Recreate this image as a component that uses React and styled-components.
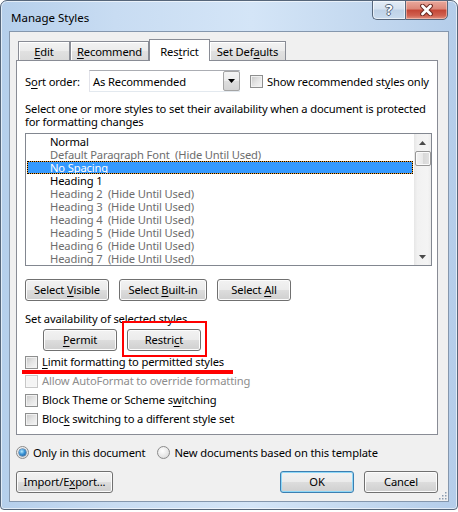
import React from "react";
import styled, { createGlobalStyle } from "styled-components";

const FONT = `"Noto Sans", "DejaVu Sans", sans-serif`;
const SIZE = "11.2px";
const TRACK = "-0.15px";

const Global = createGlobalStyle`
  html, body { margin: 0; padding: 0; background: #ffffff; }
  body { font-family: ${FONT}; font-size: ${SIZE}; letter-spacing: ${TRACK}; color: #000; }
  * { box-sizing: border-box; }
  u { text-decoration-thickness: 1px; text-underline-offset: 2px; }
`;

const Window = styled.div`
  width: 458px;
  height: 510px;
  border: 1px solid #56667a;
  border-radius: 7px 7px 4px 4px;
  background: linear-gradient(90deg, #b5cfeb 0%, #c8dcf2 25%, #d4e5f7 55%, #c3d8ef 80%, #b4cdea 100%);
  box-shadow: inset 0 0 0 1px rgba(255, 255, 255, 0.6);
  padding: 0 8px 7px 8px;
  display: flex;
  flex-direction: column;
`;

const TitleBar = styled.div`
  height: 30px;
  display: flex;
  justify-content: space-between;
  align-items: flex-start;
`;

const Title = styled.div`
  margin: 9px 0 0 2px;
  font-size: 11.5px;
  letter-spacing: 0;
  line-height: 15px;
  color: #000;
`;

const CaptionButtons = styled.div`
  display: flex;
  margin: -1px 1px 0 0;
`;

const CaptionButton = styled.div`
  height: 20px;
  width: ${(p) => p.$w}px;
  border: 1px solid #57677c;
  display: flex;
  align-items: center;
  justify-content: center;
`;

const HelpButton = styled(CaptionButton)`
  border-right: none;
  border-radius: 0 0 0 5px;
  background: linear-gradient(#e3ecf6 0%, #d5e2f0 45%, #bfd2e7 50%, #c9dbee 100%);
  box-shadow: inset 0 0 0 1px rgba(255, 255, 255, 0.6);
  span {
    font-family: ${FONT};
    font-weight: bold;
    font-size: 14px;
    line-height: 14px;
    color: #ffffff;
    text-shadow: -1px 0 0 #53647a, 1px 0 0 #53647a, 0 -1px 0 #53647a, 0 1px 0 #53647a;
  }
`;

const CloseButton = styled(CaptionButton)`
  border-radius: 0 0 5px 0;
  background: linear-gradient(#e9a99d 0%, #dc8677 45%, #c44535 50%, #d0604f 80%, #e0907f 100%);
  box-shadow: inset 0 0 0 1px rgba(255, 220, 210, 0.5);
`;

const Client = styled.div`
  position: relative;
  flex: 1;
  border: 1px solid #8597ad;
  background: #f0f0f0;
  padding: 7px 10px 0 6px;
  display: flex;
  flex-direction: column;
`;

const TabStrip = styled.div`
  display: flex;
  align-items: flex-end;
  height: 22px;
  margin-left: 2px;
  position: relative;
  z-index: 2;
`;

const Tab = styled.div`
  width: ${(p) => p.$w}px;
  height: ${(p) => (p.$active ? 22 : 20)}px;
  margin-right: ${(p) => (p.$active ? -1 : 0)}px;
  border: 1px solid #898c95;
  border-bottom: ${(p) => (p.$active ? "none" : "1px solid #898c95")};
  background: ${(p) =>
    p.$active ? "#ffffff" : "linear-gradient(#f3f3f3 0%, #ebebeb 50%, #e1e1e1 51%, #dadada 100%)"};
  box-shadow: ${(p) => (p.$active ? "none" : "inset 1px 1px 0 #ffffff")};
  display: flex;
  align-items: center;
  justify-content: center;
  padding-top: 1px;
  line-height: 13px;
  position: relative;
  z-index: ${(p) => (p.$active ? 3 : 1)};
`;

const Panel = styled.div`
  margin-top: -1px;
  height: 375px;
  border: 1px solid #898c95;
  background: #ffffff;
  padding: 9px 5px 0 8px;
  display: flex;
  flex-direction: column;
  position: relative;
  z-index: 1;
`;

const Row = styled.div`
  display: flex;
  align-items: center;
  height: ${(p) => p.$h || 22}px;
  margin-top: ${(p) => p.$mt || 0}px;
  margin-left: ${(p) => p.$ml || 0}px;
  gap: ${(p) => p.$gap || 0}px;
  line-height: 13px;
  white-space: nowrap;
  position: relative;
`;

const Label = styled.span`
  width: ${(p) => p.$w}px;
  flex: none;
`;

const Combo = styled.div`
  width: 151px;
  height: 22px;
  border: 1px solid #abadb3;
  border-right-color: #e3e9ef;
  border-bottom-color: #e3e9ef;
  border-left-color: #e2e3ea;
  background: #ffffff;
  display: flex;
  align-items: center;
  justify-content: space-between;
  padding-left: 3px;
`;

const DropButton = styled.div`
  width: 17px;
  height: 20px;
  border: 1px solid #a4a4a4;
  border-radius: 2px;
  background: linear-gradient(#f4f4f4 0%, #ececec 50%, #dedede 51%, #d4d4d4 100%);
  display: flex;
  align-items: center;
  justify-content: center;
  margin-right: -1px;
`;

const CheckBox = styled.span`
  width: 13px;
  height: 13px;
  flex: none;
  border: 1px solid ${(p) => (p.$disabled ? "#c7c7c7" : "#8e8f8f")};
  background: ${(p) =>
    p.$disabled ? "#f4f4f4" : "linear-gradient(135deg, #c6c6c6 0%, #e4e4e4 50%, #f6f6f6 100%)"};
  box-shadow: inset 0 0 0 1px ${(p) => (p.$disabled ? "#f7f7f7" : "#f1f1f1")};
  margin-top: 1px;
`;

const Radio = styled.span`
  width: 13px;
  height: 13px;
  flex: none;
  border-radius: 50%;
  border: 1px solid #8b8b8b;
  margin-left: ${(p) => p.$ml || 0}px;
  background: radial-gradient(circle at 40% 35%, #ffffff 0%, #e6e6e6 60%, #cfcfcf 100%);
  display: flex;
  align-items: center;
  justify-content: center;
  &::after {
    content: "";
    width: 7px;
    height: 7px;
    border-radius: 50%;
    display: ${(p) => (p.$checked ? "block" : "none")};
    background: radial-gradient(circle at 40% 35%, #b8ecff 0%, #3b94d6 45%, #124d8c 100%);
    box-shadow: 0 0 0 0.5px #1c4f80;
  }
`;

const Description = styled.div`
  margin-top: 10px;
  line-height: 13px;
  white-space: nowrap;
`;

const ListBox = styled.div`
  margin-top: 5px;
  width: 407px;
  height: 133px;
  border: 1px solid #828790;
  display: flex;
  padding: 1px 0 0 1px;
  flex: none;
`;

const ListItems = styled.div`
  flex: 1;
  display: flex;
  flex-direction: column;
`;

const ListItem = styled.div`
  height: 13px;
  line-height: 13px;
  padding-left: 23px;
  white-space: pre;
  color: ${(p) => (p.$selected ? "#ffffff" : p.$hidden ? "#6d6d6d" : "#000000")};
  background: ${(p) => (p.$selected ? "#3399ff" : "transparent")};
  box-shadow: ${(p) => (p.$selected ? "inset 0 0 0 1px #f0a030" : "none")};
  outline: ${(p) => (p.$selected ? "1px dotted #000" : "none")};
  outline-offset: -1px;
`;

const ScrollBar = styled.div`
  width: 17px;
  margin-top: -1px;
  margin-left: 1px;
  background: linear-gradient(90deg, #e6e6e6 0%, #f1f1f1 20%, #f4f4f4 80%, #ececec 100%);
  display: flex;
  flex-direction: column;
  align-items: center;
`;

const ScrollArrow = styled.div`
  height: 17px;
  width: 17px;
  display: flex;
  align-items: center;
  justify-content: center;
`;

const Thumb = styled.div`
  width: 16px;
  height: 15px;
  border: 1px solid #979797;
  border-radius: 2px;
  background: linear-gradient(90deg, #f3f3f3 0%, #e8e8e8 50%, #d8d8d8 51%, #e2e2e2 100%);
  box-shadow: inset 0 0 0 1px #fbfbfb;
`;

const Spacer = styled.div`
  flex: 1;
`;

const Button = styled.button`
  width: ${(p) => p.$w}px;
  height: 22px;
  flex: none;
  padding: 0 0 1px 0;
  font-family: ${FONT};
  font-size: ${SIZE};
  letter-spacing: ${TRACK};
  line-height: 13px;
  color: #000000;
  border: 1px solid ${(p) => (p.$default ? "#3c7fb1" : "#707070")};
  border-radius: 3px;
  background: linear-gradient(#f2f2f2 0%, #ebebeb 50%, #dddddd 51%, #cfcfcf 100%);
  box-shadow: inset 0 0 0 1px ${(p) => (p.$default ? "#8fd8f8" : "#fcfcfc")};
  position: relative;
`;

const MarkedButton = styled(Button)`
  &::after {
    content: "";
    position: absolute;
    left: -6px;
    top: -9px;
    right: -7px;
    bottom: -7px;
    border: 2px solid #ff0000;
    pointer-events: none;
  }
`;

const Underlined = styled(Row)`
  &::after {
    content: "";
    position: absolute;
    left: -3px;
    top: 18px;
    width: 211px;
    height: 4px;
    background: #ff0000;
    pointer-events: none;
  }
`;

const Muted = styled.span`
  color: #8d8d8d;
`;

const ButtonBar = styled.div`
  display: flex;
  justify-content: space-between;
  margin-top: 10px;
`;

const RightButtons = styled.div`
  display: flex;
  gap: 10px;
`;

const Grip = styled.svg`
  position: absolute;
  right: 1px;
  bottom: 1px;
`;

const styles = [
  { name: "Normal" },
  { name: "Default Paragraph Font", hidden: true },
  { name: "No Spacing", selected: true },
  { name: "Heading 1" },
  { name: "Heading 2", hidden: true },
  { name: "Heading 3", hidden: true },
  { name: "Heading 4", hidden: true },
  { name: "Heading 5", hidden: true },
  { name: "Heading 6", hidden: true },
  { name: "Heading 7", hidden: true },
];

const Triangle = ({ up, color = "#000" }) => (
  <svg width="7" height="4" viewBox="0 0 7 4">
    <path d={up ? "M0 4 L3.5 0 L7 4 Z" : "M0 0 L7 0 L3.5 4 Z"} fill={color} />
  </svg>
);

export default function App() {
  return (
    <>
      <Global />
      <Window>
        <TitleBar>
          <Title>Manage Styles</Title>
          <CaptionButtons>
            <HelpButton $w={33}>
              <span>?</span>
            </HelpButton>
            <CloseButton $w={43}>
              <svg width="15" height="12" viewBox="0 0 15 12">
                <path d="M3.5 2 L11.5 10 M11.5 2 L3.5 10" stroke="#6e2a22" strokeWidth="4.8" strokeLinecap="round" />
                <path d="M3.5 2 L11.5 10 M11.5 2 L3.5 10" stroke="#ffffff" strokeWidth="2.8" strokeLinecap="round" />
              </svg>
            </CloseButton>
          </CaptionButtons>
        </TitleBar>
        <Client>
          <TabStrip>
            <Tab $w={52}>
              <span><u>E</u>dit</span>
            </Tab>
            <Tab $w={79}>
              <span><u>R</u>ecommend</span>
            </Tab>
            <Tab $w={61} $active>
              <span>Res<u>t</u>rict</span>
            </Tab>
            <Tab $w={77}>
              <span>Set Def<u>a</u>ults</span>
            </Tab>
          </TabStrip>
          <Panel>
            <Row>
              <Label $w={64}>S<u>o</u>rt order:</Label>
              <Combo>
                <span>As Recommended</span>
                <DropButton>
                  <Triangle />
                </DropButton>
              </Combo>
              <Row $h={22} $ml={10} $gap={4}>
                <CheckBox />
                <span>Show recommended st<u>y</u>les only</span>
              </Row>
            </Row>
            <Description>
              Select one or more styles to set their availability when a document is protected
              <br />
              for formatting changes
            </Description>
            <ListBox>
              <ListItems>
                {styles.map((s) => (
                  <ListItem key={s.name} $hidden={s.hidden} $selected={s.selected}>
                    {s.hidden ? `${s.name}  (Hide Until Used)` : s.name}
                  </ListItem>
                ))}
              </ListItems>
              <ScrollBar>
                <ScrollArrow>
                  <Triangle up color="#4a4a4a" />
                </ScrollArrow>
                <Thumb />
                <Spacer />
                <ScrollArrow>
                  <Triangle color="#4a4a4a" />
                </ScrollArrow>
              </ScrollBar>
            </ListBox>
            <Row $mt={13} $gap={10}>
              <Button $w={84}>Select <u>V</u>isible</Button>
              <Button $w={88}>Select <u>B</u>uilt-in</Button>
              <Button $w={74}>Select <u>A</u>ll</Button>
            </Row>
            <Row $h={13} $mt={11}>
              Set availability of selected styles
            </Row>
            <Row $mt={4} $ml={18} $gap={10}>
              <Button $w={74}><u>P</u>ermit</Button>
              <MarkedButton $w={74}>Restri<u>c</u>t</MarkedButton>
            </Row>
            <Underlined $h={19} $mt={1} $gap={4}>
              <CheckBox />
              <span><u>L</u>imit formatting to permitted styles</span>
            </Underlined>
            <Row $h={19} $gap={4}>
              <CheckBox $disabled />
              <Muted>Allow AutoFormat to override formatting</Muted>
            </Row>
            <Row $h={19} $gap={4}>
              <CheckBox />
              <span>Block Theme or Scheme s<u>w</u>itching</span>
            </Row>
            <Row $h={19} $gap={4}>
              <CheckBox />
              <span>Bloc<u>k</u> switching to a different style set</span>
            </Row>
          </Panel>
          <Row $h={18} $mt={8} $gap={4}>
            <Radio $checked />
            <span>Only in this document</span>
            <Radio $ml={8} />
            <span>New documents based on this template</span>
          </Row>
          <ButtonBar>
            <Button $w={97}>Import/E<u>x</u>port...</Button>
            <RightButtons>
              <Button $w={74} $default>OK</Button>
              <Button $w={74}>Cancel</Button>
            </RightButtons>
          </ButtonBar>
          <Grip width="10" height="10" viewBox="0 0 10 10">
            {[
              [8, 2], [8, 5], [5, 5], [8, 8], [5, 8], [2, 8],
            ].map(([x, y]) => (
              <rect key={`${x}-${y}`} x={x} y={y} width="1.5" height="1.5" fill="#8a9bb0" />
            ))}
          </Grip>
        </Client>
      </Window>
    </>
  );
}
